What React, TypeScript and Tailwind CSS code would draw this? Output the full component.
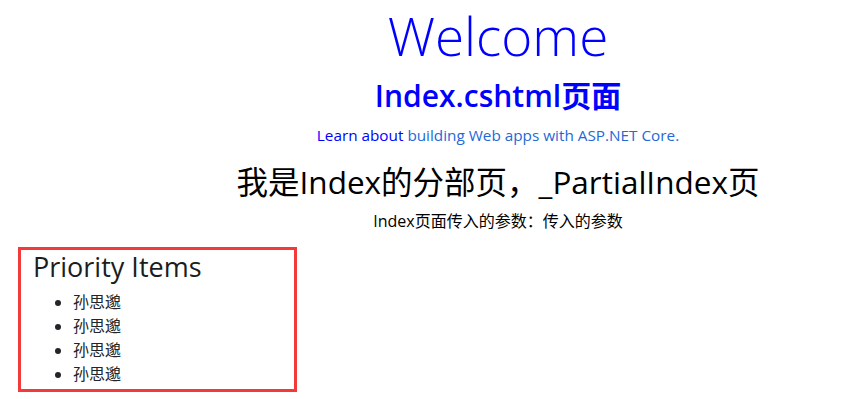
export default function App() {
  const font = { fontFamily: '"Open Sans", "Noto Sans CJK SC", sans-serif' };
  return (
    <div className="w-[854px] h-[399px] overflow-hidden bg-white text-[#212529]" style={font}>
      <div className="pl-[142px] pt-[2px] text-center">
        <h1 className="text-[53px] leading-[67px] font-light text-[#0000ff] mb-2">Welcome</h1>
        <h2 className="text-[30px] leading-[38px] font-semibold text-[#0000ff] mb-2">Index.cshtml页面</h2>
        <p className="text-[15.3px] leading-6 mb-4">
          <span className="text-[#0000ff]">Learn about </span>
          <span className="text-[#2368d8]">building Web apps with ASP.NET Core.</span>
        </p>
        <h2 className="text-[31.5px] leading-[38px] font-normal text-black mb-2">我是Index的分部页，_PartialIndex页</h2>
        <p className="text-[16px] leading-6 text-black">Index页面传入的参数：传入的参数</p>
      </div>
      <div className="ml-[18px] mt-[14px] w-[279px] h-[145px] border-[3px] border-[#f33a3a] pl-3">
        <h3 className="text-[27px] leading-[34px] font-normal mb-[6px] text-[#1a1d20]">Priority Items</h3>
        <ul className="list-disc pl-10 text-[16px] leading-6">
          <li>孙思邈</li>
          <li>孙思邈</li>
          <li>孙思邈</li>
          <li>孙思邈</li>
        </ul>
      </div>
    </div>
  );
}
